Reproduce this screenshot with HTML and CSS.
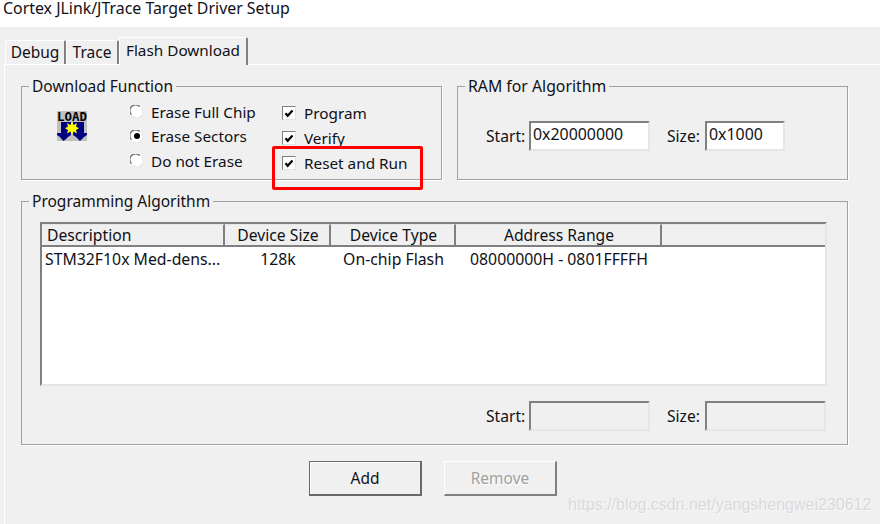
FILE: index.html
```html
<!DOCTYPE html>
<html lang="en">
<head>
<meta charset="utf-8">
<title>Cortex JLink/JTrace Target Driver Setup</title>
<link rel="stylesheet" href="styles.css">
</head>
<body>
<svg class="defs" width="0" height="0" aria-hidden="true">
  <symbol id="radio" viewBox="0 0 14 14">
    <circle cx="7" cy="7" r="6.500" fill="#fff"/>
    <path d="M1.600 10.400A6.200 6.200 0 0 1 10.400 1.600" fill="none" stroke="#707070" stroke-width="1.300"/>
    <path d="M12.400 3.600A6.200 6.200 0 0 1 3.600 12.400" fill="none" stroke="#e3e3e3" stroke-width="1.200"/>
  </symbol>
  <symbol id="check" viewBox="0 0 10 9">
    <path d="M1.500 4.200L3.700 6.800L8.500 1.600" fill="none" stroke="#000" stroke-width="2.200"/>
  </symbol>
</svg>
<header class="titlebar">Cortex JLink/JTrace Target Driver Setup</header>
<nav class="tabs">
  <div class="tab tab-debug">Debug</div>
  <div class="tab tab-trace">Trace</div>
  <div class="tab tab-active">Flash Download</div>
</nav>
<main class="panel">
  <div class="top-row">
    <section class="group group-download">
      <h2 class="legend">Download Function</h2>
      <svg class="load-icon" width="30" height="30" viewBox="0 0 30 30" role="img" aria-label="Load">
        <rect width="30" height="30" fill="#c0c0c0"/>
        <text class="load-text" x="15" y="9.500" text-anchor="middle" textLength="30" lengthAdjust="spacingAndGlyphs">LOAD</text>
        <path d="M4 11H14V22H14V24L11 26L9 28L6.500 30L4.500 28L3 26L0 24V22H4Z" fill="#000080"/>
        <path d="M16 11H27V22H30V24L27 26L25 28L23 30L21 28L19 26L16 24Z" fill="#000080"/>
        <path d="M15 10.500L16.700 14L20 12L19 15.500L22 17.300L19 19L20 22.500L16.700 20.500L15 24L13.300 20.500L10 22.500L11 19L8 17.300L11 15.500L10 12L13.300 14Z" fill="#ffff00"/>
      </svg>
      <ul class="radios">
        <li class="option"><svg class="radio"><use href="#radio"/></svg>Erase Full Chip</li>
        <li class="option"><span class="radio-wrap"><svg class="radio"><use href="#radio"/></svg><i class="dot"></i></span>Erase Sectors</li>
        <li class="option"><svg class="radio"><use href="#radio"/></svg>Do not Erase</li>
      </ul>
      <ul class="checks">
        <li class="option check-option"><span class="checkbox"><svg width="10" height="9"><use href="#check"/></svg></span>Program</li>
        <li class="option check-option"><span class="checkbox"><svg width="10" height="9"><use href="#check"/></svg></span>Verify</li>
        <li class="option check-option"><span class="checkbox"><svg width="10" height="9"><use href="#check"/></svg></span>Reset and Run</li>
      </ul>
      <div class="highlight"></div>
    </section>
    <section class="group group-ram">
      <h2 class="legend legend-wide">RAM for Algorithm</h2>
      <div class="fields">
        <label class="field-label">Start:</label>
        <div class="field field-start">0x20000000</div>
        <label class="field-label label-size">Size:</label>
        <div class="field field-size">0x1000</div>
      </div>
    </section>
  </div>
  <section class="group group-algo">
    <h2 class="legend">Programming Algorithm</h2>
    <div class="list">
      <div class="list-head">
        <div class="head-cell head-left">Description</div>
        <div class="head-cell">Device Size</div>
        <div class="head-cell">Device Type</div>
        <div class="head-cell">Address Range</div>
        <div class="head-cell head-last"></div>
      </div>
      <div class="list-row">
        <div class="cell-left">STM32F10x Med-dens...</div>
        <div class="cell">128k</div>
        <div class="cell">On-chip Flash</div>
        <div class="cell">08000000H - 0801FFFFH</div>
        <div></div>
      </div>
    </div>
    <div class="fields fields-low">
      <label class="field-label">Start:</label>
      <div class="field field-start field-off"></div>
      <label class="field-label label-size">Size:</label>
      <div class="field field-wide field-off"></div>
    </div>
  </section>
  <div class="actions">
    <button class="btn btn-default" type="button">Add</button>
    <button class="btn btn-disabled" type="button">Remove</button>
  </div>
</main>
<div class="watermark">https://blog.csdn.net/yangshengwei230612</div>
</body>
</html>
```
FILE: styles.css
```css
* { box-sizing: border-box; }
html, body { margin: 0; padding: 0; }
body {
  position: relative;
  width: 880px;
  height: 524px;
  overflow: hidden;
  background: #f0f0f0;
  color: #101018;
  font-family: "Noto Sans", "Open Sans", sans-serif;
  font-size: 15.5px;
  line-height: 20px;
}
.defs { position: absolute; }
.titlebar {
  height: 27px;
  padding: 0 0 6px 3px;
  background: #fff;
  font-size: 15.9px;
  line-height: 17px;
  white-space: nowrap;
}
.tabs {
  display: flex;
  align-items: flex-end;
  height: 37px;
  padding-left: 5px;
  position: relative;
  z-index: 1;
}
.tab {
  height: 24px;
  padding-top: 1px;
  text-align: center;
  background: #f0f0f0;
  border-top: 1px solid #fff;
  border-left: 1px solid #fff;
  border-right: 2px solid #808080;
  border-radius: 2px 2px 0 0;
}
.tab-debug { width: 61px; }
.tab-trace { width: 53px; }
.tab-active {
  width: 129px;
  height: 28px;
  margin-bottom: -1px;
  padding-top: 2px;
  font-size: 15.3px;
}
.panel {
  display: flex;
  flex-direction: column;
  height: 460px;
  margin-left: 4px;
  padding: 21px 0 0 16px;
  border-top: 1px solid #fff;
  border-left: 1px solid #fff;
}
.top-row { display: flex; gap: 15px; }
.group {
  position: relative;
  border: 1px solid #a0a0a0;
  box-shadow: 1px 1px 0 #fff;
}
.legend {
  position: absolute;
  top: -11px;
  left: 7px;
  margin: 0;
  padding: 0 3px;
  background: #f0f0f0;
  font-size: 15.5px;
  font-weight: 400;
  line-height: 20px;
  white-space: nowrap;
}
.legend-wide { font-size: 15.8px; }
.group-download {
  display: flex;
  align-items: flex-start;
  width: 421px;
  height: 94px;
}
.group-ram { width: 391px; height: 94px; }
.load-icon { flex: none; margin: 24px 43px 0 35px; }
.load-text { font-family: "DejaVu Sans Mono", monospace; font-size: 12px; font-weight: 700; fill: #000; }
.radios, .checks { list-style: none; margin: 0; padding: 0; }
.radios { width: 152px; padding-top: 12.5px; }
.checks { padding-top: 13.5px; }
.option {
  display: flex;
  align-items: center;
  gap: 8px;
  height: 24.5px;
  font-size: 15.3px;
  white-space: nowrap;
}
.check-option { height: 25px; }
.radio { display: block; width: 13px; height: 13px; flex: none; }
.radio-wrap { display: grid; place-items: center; flex: none; }
.radio-wrap > * { grid-area: 1 / 1; }
.dot { width: 6px; height: 6px; border-radius: 50%; background: #000; }
.checkbox {
  display: flex;
  align-items: center;
  justify-content: center;
  flex: none;
  width: 14px;
  height: 14px;
  background: #fff;
  border-top: 1px solid #808080;
  border-left: 1px solid #808080;
  border-right: 1px solid #e3e3e3;
  border-bottom: 1px solid #e3e3e3;
}
.highlight {
  position: absolute;
  left: 250px;
  top: 59px;
  width: 151px;
  height: 44px;
  border: 3px solid #f00;
  border-radius: 2px;
}
.fields {
  display: flex;
  align-items: center;
  padding: 34px 0 0 28px;
}
.fields-low { padding: 15px 0 0 446px; }
.field-label { width: 43px; line-height: 29px; padding-top: 1px; font-size: 15.6px; }
.label-size { width: 38px; margin-left: 17px; }
.field {
  height: 30px;
  padding-left: 2px;
  background: #fff;
  border-top: 2px solid #808080;
  border-left: 2px solid #808080;
  border-right: 2px solid #e6e6e6;
  border-bottom: 2px solid #e6e6e6;
  font-size: 15.9px;
  line-height: 22px;
}
.field-start { width: 121px; }
.field-size { width: 80px; }
.field-wide { width: 121px; }
.field-off { background: #f0f0f0; }
.group-algo {
  width: 827px;
  height: 244px;
  margin-top: 21px;
  padding: 20px 0 0 18px;
}
.list {
  width: 787px;
  height: 164px;
  background: #fff;
  border-top: 2px solid #808080;
  border-left: 2px solid #808080;
  border-right: 2px solid #e6e6e6;
  border-bottom: 2px solid #e6e6e6;
}
.list-head, .list-row {
  display: grid;
  grid-template-columns: 183px 106px 125px 206px 1fr;
}
.list-head { height: 23px; background: #f0f0f0; border-bottom: 2px solid #808080; }
.head-cell {
  height: 21px;
  padding-left: 2px;
  font-size: 15.7px;
  text-align: center;
  border-right: 2px solid #808080;
  border-top: 1px solid #e6e6e6;
  white-space: nowrap;
}
.head-left { text-align: left; padding-left: 5px; }
.head-last { border-right: 0; }
.list-row { height: 25px; font-size: 15.8px; line-height: 24px; white-space: nowrap; }
.cell-left { padding-left: 3px; }
.cell { text-align: center; }
.actions { display: flex; gap: 22px; margin: 16px 0 0 288px; }
.btn {
  width: 113px;
  height: 35px;
  padding: 0;
  background: #f0f0f0;
  color: inherit;
  font: inherit;
  box-shadow: inset 1px 1px 0 #fff;
}
.btn-default {
  border-top: 1px solid #696969;
  border-left: 1px solid #696969;
  border-right: 2px solid #696969;
  border-bottom: 2px solid #696969;
}
.btn-disabled {
  color: #a0a0a0;
  text-shadow: 1px 1px 0 #fff;
  border-top: 1px solid #fff;
  border-left: 1px solid #fff;
  border-right: 2px solid #808080;
  border-bottom: 2px solid #808080;
  box-shadow: none;
}
.watermark {
  position: absolute;
  left: 568px;
  top: 495px;
  color: #dadada;
  font-family: "Liberation Sans", sans-serif;
  font-size: 16px;
  line-height: 20px;
  text-shadow: 1px 1px 0 #f8f8f8;
  white-space: nowrap;
}
```
